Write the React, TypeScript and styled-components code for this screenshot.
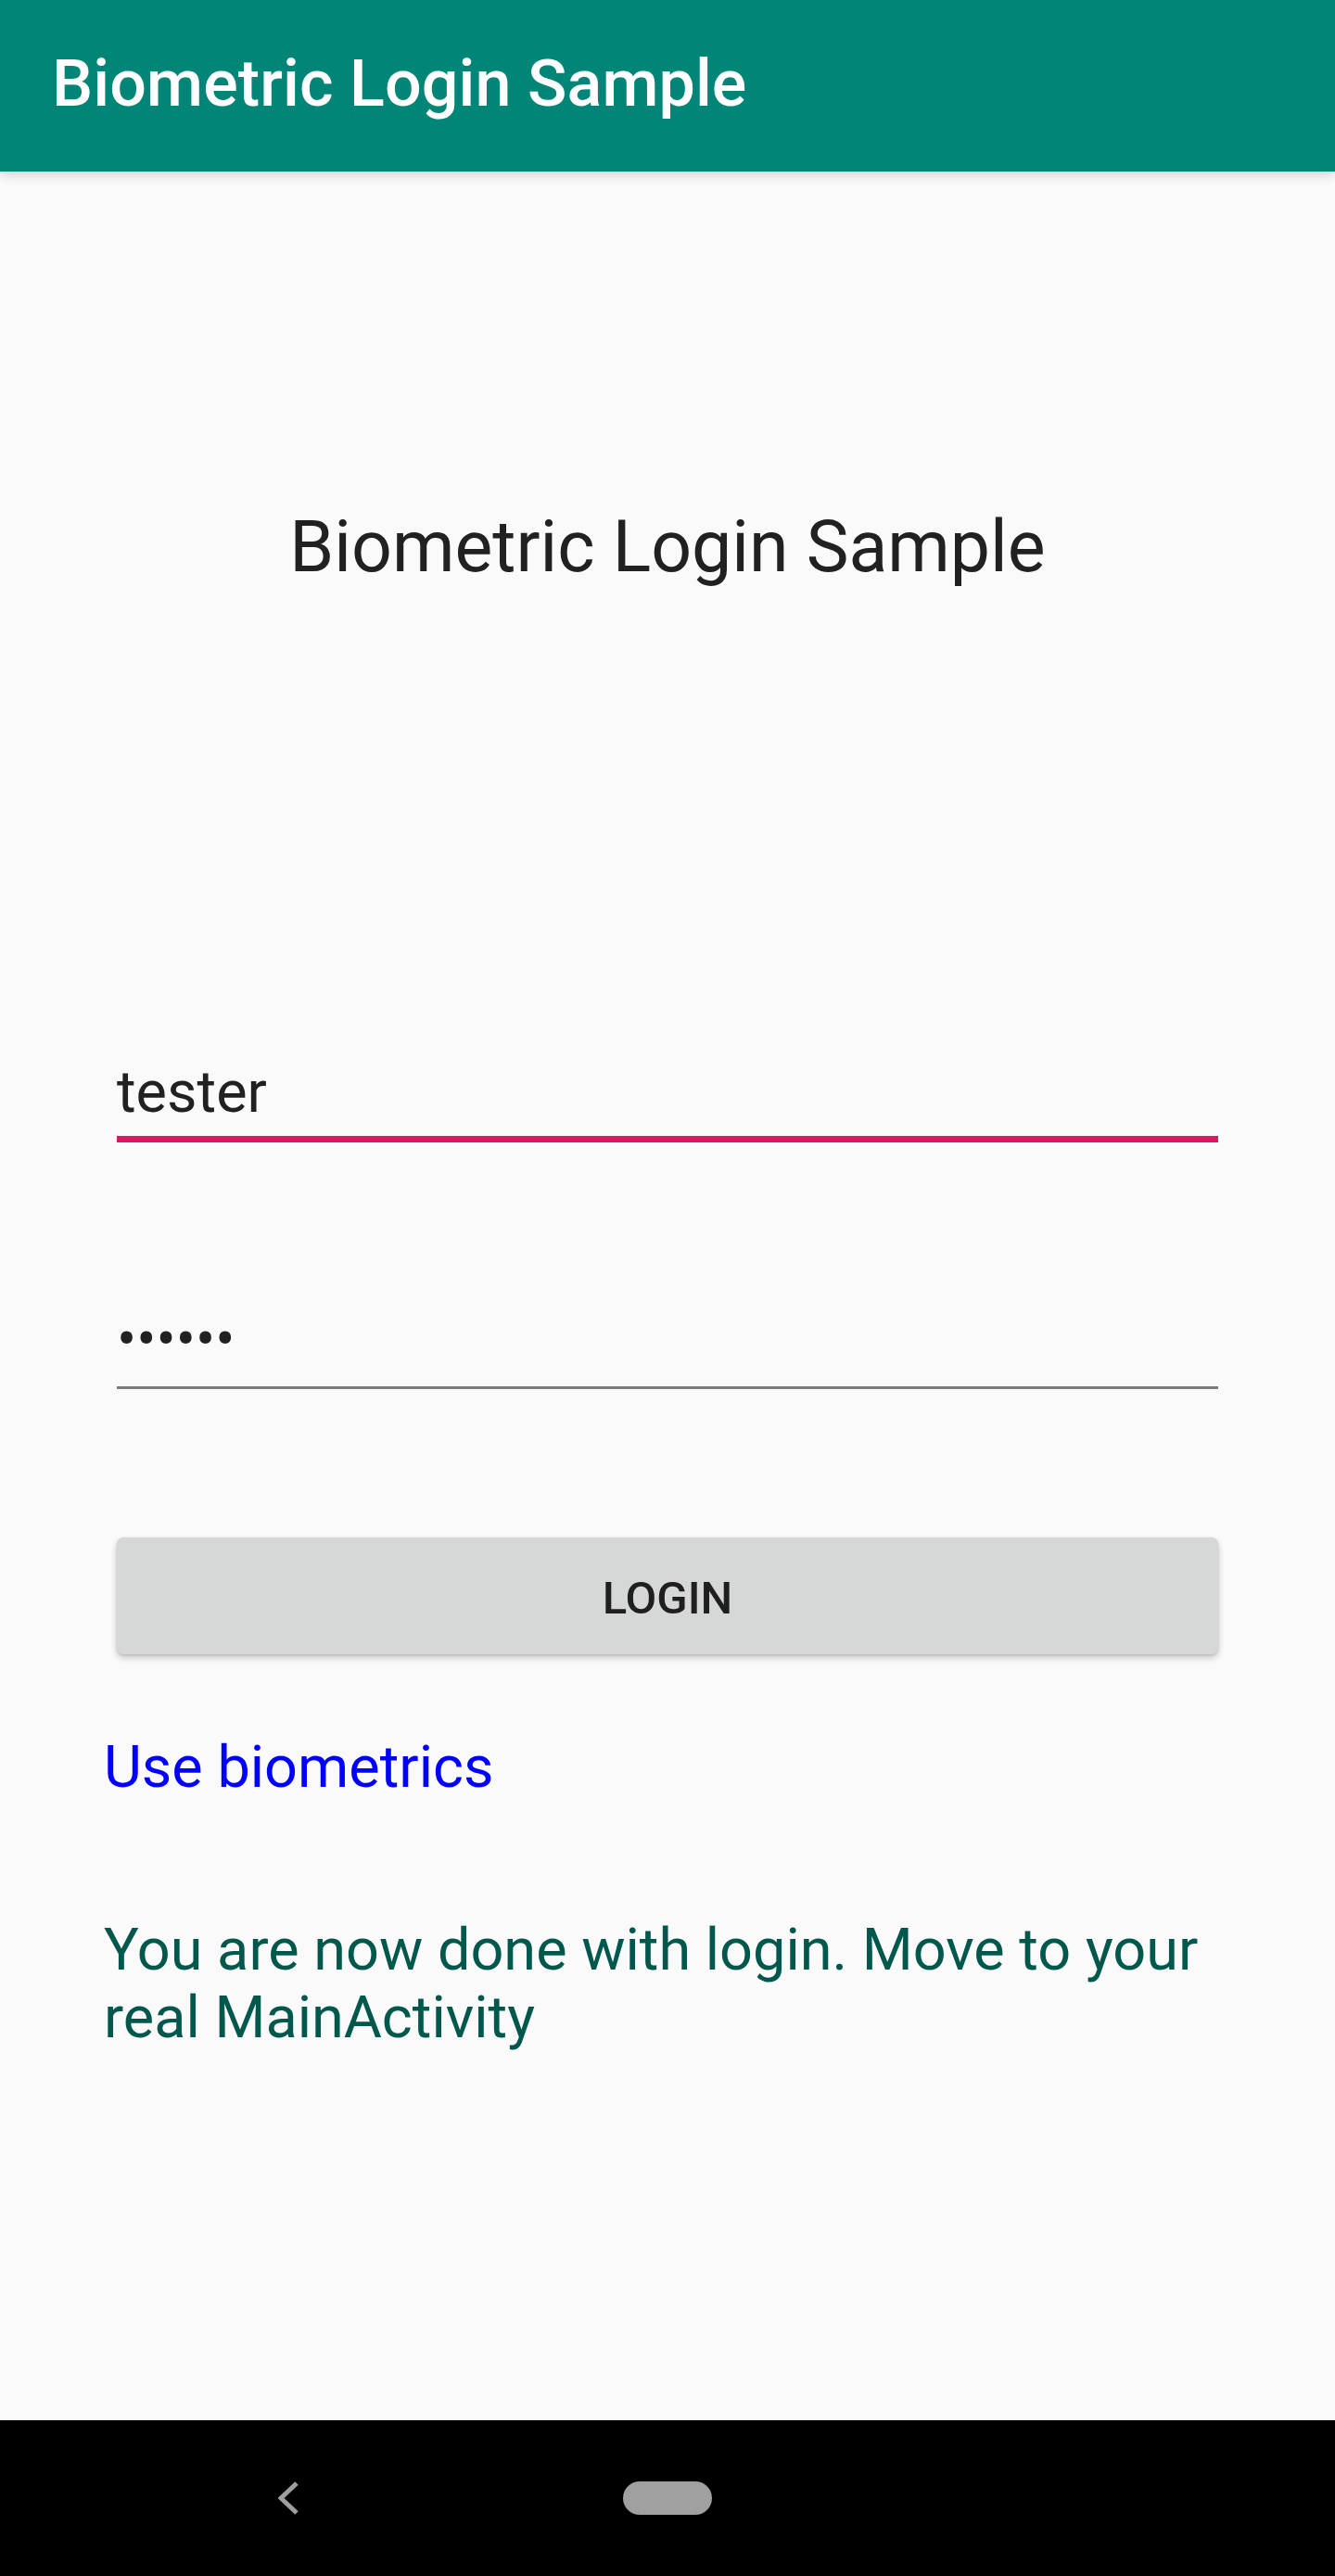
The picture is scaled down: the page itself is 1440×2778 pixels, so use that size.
import React from 'react';
import styled, { createGlobalStyle } from 'styled-components';

const GlobalStyle = createGlobalStyle`
  html, body {
    margin: 0;
    padding: 0;
    background: #fafafa;
  }
  body {
    font-family: Roboto, "Noto Sans", "Liberation Sans", sans-serif;
    -webkit-font-smoothing: antialiased;
  }
`;

const App: React.FC = () => {
  return (
    <>
      <GlobalStyle />
      <Screen>
        <AppBar>
          <AppBarTitle>Biometric Login Sample</AppBarTitle>
        </AppBar>

        <Content>
          <Heading>Biometric Login Sample</Heading>

          <Form>
            <Field $focused>
              <FieldValue>tester</FieldValue>
            </Field>
            <Field>
              <FieldValue>••••••</FieldValue>
            </Field>
            <LoginButton type="button">Login</LoginButton>
          </Form>

          <BiometricsLink>Use biometrics</BiometricsLink>
          <SuccessMessage>
            You are now done with login. Move to your real MainActivity
          </SuccessMessage>
        </Content>

        <NavBar>
          <BackButton aria-label="Back">
            <svg width="22" height="36" viewBox="0 0 22 36">
              <polyline
                points="20,2 3,18 20,34"
                fill="none"
                stroke="#9e9e9e"
                strokeWidth="5"
                strokeLinejoin="miter"
              />
            </svg>
          </BackButton>
          <HomePill />
        </NavBar>
      </Screen>
    </>
  );
};

const Screen = styled.div`
  display: flex;
  flex-direction: column;
  min-height: 100vh;
  background: #fafafa;
`;

const AppBar = styled.header`
  position: relative;
  z-index: 2;
  box-sizing: border-box;
  height: 185px;
  padding: 49px 0 0 56px;
  background: #008577;
  box-shadow: 0 3px 12px rgba(0, 0, 0, 0.18);
`;

const AppBarTitle = styled.h1`
  margin: 0;
  font-size: 70px;
  line-height: 82px;
  font-weight: 500;
  letter-spacing: 0.1px;
  color: #ffffff;
`;

const Content = styled.main`
  flex: 1;
  display: flex;
  flex-direction: column;
  padding: 0 112px;
`;

const Heading = styled.h2`
  margin: 360px 0 0;
  font-size: 77px;
  line-height: 90px;
  font-weight: 400;
  color: #212121;
  text-align: center;
`;

const Form = styled.div`
  display: flex;
  flex-direction: column;
  margin: 506px 14px 0;
`;

const Field = styled.div<{ $focused?: boolean }>`
  padding-bottom: ${({ $focused }) => ($focused ? '9.5px' : '13px')};
  border-bottom: ${({ $focused }) =>
    $focused ? '7px solid #d81b60' : '3.5px solid #7b7b7b'};

  & + & {
    margin-top: 176px;
  }
`;

const FieldValue = styled.div`
  font-size: 63px;
  line-height: 74px;
  color: #212121;
`;

const LoginButton = styled.button`
  margin-top: 160px;
  height: 126px;
  padding: 6px 0 0;
  border: none;
  border-radius: 7px;
  background: #d6d7d7;
  box-shadow: 0 4px 7px rgba(0, 0, 0, 0.2), 0 1px 3px rgba(0, 0, 0, 0.12);
  font-family: inherit;
  font-size: 49px;
  font-weight: 500;
  text-transform: uppercase;
  color: #1f1f1f;
  cursor: pointer;
`;

const BiometricsLink = styled.div`
  margin-top: 85px;
  font-size: 63px;
  line-height: 74px;
  color: #0000ff;
`;

const SuccessMessage = styled.p`
  margin: 123px 0 0;
  font-size: 63px;
  line-height: 73px;
  color: #00574b;
`;

const NavBar = styled.nav`
  display: flex;
  align-items: center;
  gap: 350px;
  height: 168px;
  padding-left: 300px;
  background: #000000;
`;

const BackButton = styled.div`
  display: flex;
  width: 22px;
  height: 36px;
`;

const HomePill = styled.div`
  width: 96px;
  height: 36px;
  border-radius: 18px;
  background: #a0a0a0;
`;

export default App;
